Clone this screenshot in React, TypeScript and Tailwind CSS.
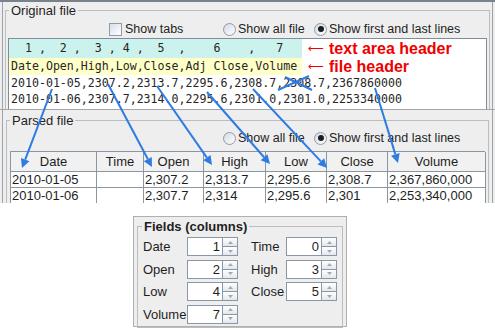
import React from "react";

type Seg = [number, number, number, number];

// blue callouts drawn over the screenshot: from text to table column
const arrows: Seg[] = [
  [52, 89, 22, 168],
  [108, 84, 152, 167],
  [157, 86, 212, 165],
  [207, 92, 270, 164],
  [253, 89, 327, 168],
  [375, 88, 398, 163],
];

const cols = ["Date", "Time", "Open", "High", "Low", "Close", "Volume"];
const rows = [
  ["2010-01-05", "", "2,307.2", "2,313.7", "2,295.6", "2,308.7", "2,367,860,000"],
  ["2010-01-06", "", "2,307.7", "2,314", "2,295.6", "2,301", "2,253,340,000"],
];

const fields: [string, number, string?, number?][] = [
  ["Date", 1, "Time", 0],
  ["Open", 2, "High", 3],
  ["Low", 4, "Close", 5],
  ["Volume", 7],
];

function Arrow({ a }: { a: Seg }) {
  const [x1, y1, x2, y2] = a;
  const len = Math.hypot(x2 - x1, y2 - y1);
  const ux = (x2 - x1) / len;
  const uy = (y2 - y1) / len;
  const bx = x2 - ux * 9;
  const by = y2 - uy * 9;
  const px = -uy * 4.5;
  const py = ux * 4.5;
  return (
    <g>
      <line x1={x1} y1={y1} x2={bx} y2={by} />
      <polygon
        points={`${x2},${y2} ${bx + px},${by + py} ${bx - px},${by - py}`}
        fill="#2e7be2"
        stroke="none"
      />
    </g>
  );
}

function CheckBox() {
  return <span className="inline-block w-[13px] h-[13px] border border-[#8e9bab] bg-linear-to-br from-[#d8dfe8] to-white" />;
}

function Radio({ on }: { on?: boolean }) {
  return (
    <span className="inline-flex items-center justify-center w-[13px] h-[13px] rounded-full border border-[#8e9bab] bg-linear-to-br from-[#d3dae3] to-white">
      {on && <span className="w-[6px] h-[6px] rounded-full bg-[#1d1d1d]" />}
    </span>
  );
}

function Spinner({ value }: { value: number }) {
  return (
    <div className="flex h-[19px]">
      <div className="w-[36px] h-full border border-[#8a97a6] bg-white text-right pr-[2px] leading-[17px]">{value}</div>
      <div className="w-[15px] h-full flex flex-col border border-l-0 border-[#8a97a6]">
        <div className="flex-1 flex items-center justify-center border-b border-[#8a97a6] bg-linear-to-b from-white to-[#e4e7eb]">
          <svg width="5" height="3"><polygon points="0,3 2.5,0 5,3" fill="#a3a9b0" /></svg>
        </div>
        <div className="flex-1 flex items-center justify-center bg-linear-to-b from-white to-[#e4e7eb]">
          <svg width="5" height="3"><polygon points="0,0 2.5,3 5,0" fill="#a3a9b0" /></svg>
        </div>
      </div>
    </div>
  );
}

function Note({ text, h }: { text: string; h: string }) {
  return (
    <div className={`ml-[6px] flex items-center text-[#f00000] font-['Liberation_Sans',Arial,sans-serif] font-bold text-[16px] ${h}`}>
      <span className="w-[21px] font-normal font-['DejaVu_Sans',sans-serif] text-[11px]">⟵</span>
      <span>{text}</span>
    </div>
  );
}

export default function App() {
  return (
    <div className="relative w-[495px] h-[330px] bg-white overflow-hidden font-['Liberation_Sans',Arial,sans-serif] text-[12.5px] text-[#1e1e1e]">
      {/* Original file */}
      <div className="h-[109px] overflow-hidden bg-[#eeeeee] border-t-2 border-[#7a838c]">
        <div className="h-full mx-[2px] border-x border-[#9ba3ab] px-[2px] pt-[1px]">
          <fieldset className="border border-[#bdbdbd]">
            <legend className="ml-[3px] px-[2px] leading-[15px] text-[13px]">Original file</legend>
            <div className="flex items-center h-[18px] mt-[2px] pl-[103px]">
              <div className="w-[114px] flex items-center gap-[3px]">
                <CheckBox />
                <span>Show tabs</span>
              </div>
              <div className="w-[91px] flex items-center gap-[2px]">
                <Radio />
                <span>Show all file</span>
              </div>
              <div className="flex items-center gap-[2px]">
                <Radio on />
                <span>Show first and last lines</span>
              </div>
            </div>
            <div className="mx-[2px] h-[80px] border border-[#7f8c9a] bg-white font-['DejaVu_Sans_Mono',monospace] text-[11.6px] text-[#262626]">
              <div className="flex items-center">
                <div className="w-[293px] h-[19px] bg-[#ccf2ee] pl-[2px] leading-[19px] whitespace-pre">{"  1 ,  2 ,  3 , 4 ,  5  ,    6    ,   7  "}</div>
                <Note text="text area header" h="leading-[19px]" />
              </div>
              <div className="flex items-center">
                <div className="w-[293px] h-[17px] bg-[#ffffc8] pl-[2px] leading-[17px] whitespace-pre">Date,Open,High,Low,Close,Adj Close,Volume</div>
                <Note text="file header" h="leading-[17px]" />
              </div>
              <div className="h-[16px] pl-[2px] leading-[16px] whitespace-pre">2010-01-05,2307.2,2313.7,2295.6,2308.7,2308.7,2367860000</div>
              <div className="h-[16px] pl-[2px] leading-[16px] whitespace-pre">2010-01-06,2307.7,2314.0,2295.6,2301.0,2301.0,2253340000</div>
            </div>
          </fieldset>
        </div>
      </div>

      {/* Parsed file */}
      <div className="h-[94px] overflow-hidden bg-[#eeeeee] border-t border-[#a5a5a5]">
        <div className="h-full mx-[2px] border-x border-[#9ba3ab] px-[3px] pt-[3px]">
          <fieldset className="border border-[#bdbdbd]">
            <legend className="ml-[3px] px-[2px] leading-[15px] text-[13px]">Parsed file</legend>
            <div className="flex items-center h-[16px] mt-[2px] pl-[216px]">
              <div className="w-[91px] flex items-center gap-[2px]">
                <Radio />
                <span>Show all file</span>
              </div>
              <div className="flex items-center gap-[2px]">
                <Radio on />
                <span>Show first and last lines</span>
              </div>
            </div>
            <div className="mt-[5px] ml-[3px] w-[475px] grid grid-cols-[86px_47px_60px_62px_61px_61px_98px] border-l border-t border-[#8b96a3] bg-white text-[13px]">
              {cols.map((c) => (
                <div key={c} className="h-[20px] leading-[19px] text-center bg-[#f1f1f1] border-r border-b border-[#8b96a3]">{c}</div>
              ))}
              {rows.flat().map((v, i) => (
                <div key={i} className="h-[16px] leading-[15px] pl-[1px] border-r border-b border-[#8b96a3] whitespace-nowrap">{v}</div>
              ))}
            </div>
          </fieldset>
        </div>
      </div>

      {/* Fields (columns) */}
      <div className="mt-[13px] ml-[133px] w-[214px] h-[111px] border border-[#b0b0b0] bg-[#eeeeee] px-[3px] pt-[2px] text-[13px]">
        <fieldset className="border border-[#bdbdbd] pb-[3px]">
          <legend className="ml-[4px] px-[2px] leading-[15px] font-bold">Fields (columns)</legend>
          <div className="mt-[3px] pl-[5px] grid grid-cols-[44px_51px_13px_35px_51px] gap-y-[3px] items-center">
            {fields.map(([a, av, b, bv]) => (
              <React.Fragment key={a}>
                <span>{a}</span>
                <Spinner value={av} />
                <span />
                {b ? <span>{b}</span> : <span />}
                {b ? <Spinner value={bv as number} /> : <span />}
              </React.Fragment>
            ))}
          </div>
        </fieldset>
      </div>

      {/* annotation overlay */}
      <svg className="absolute inset-0 pointer-events-none" width="495" height="330" stroke="#2e7be2" strokeWidth="2" fill="none">
        {arrows.map((a, i) => (
          <Arrow key={i} a={a} />
        ))}
        <line x1="278" y1="90" x2="309" y2="76" />
        <line x1="285" y1="77" x2="312" y2="90" />
      </svg>
    </div>
  );
}
